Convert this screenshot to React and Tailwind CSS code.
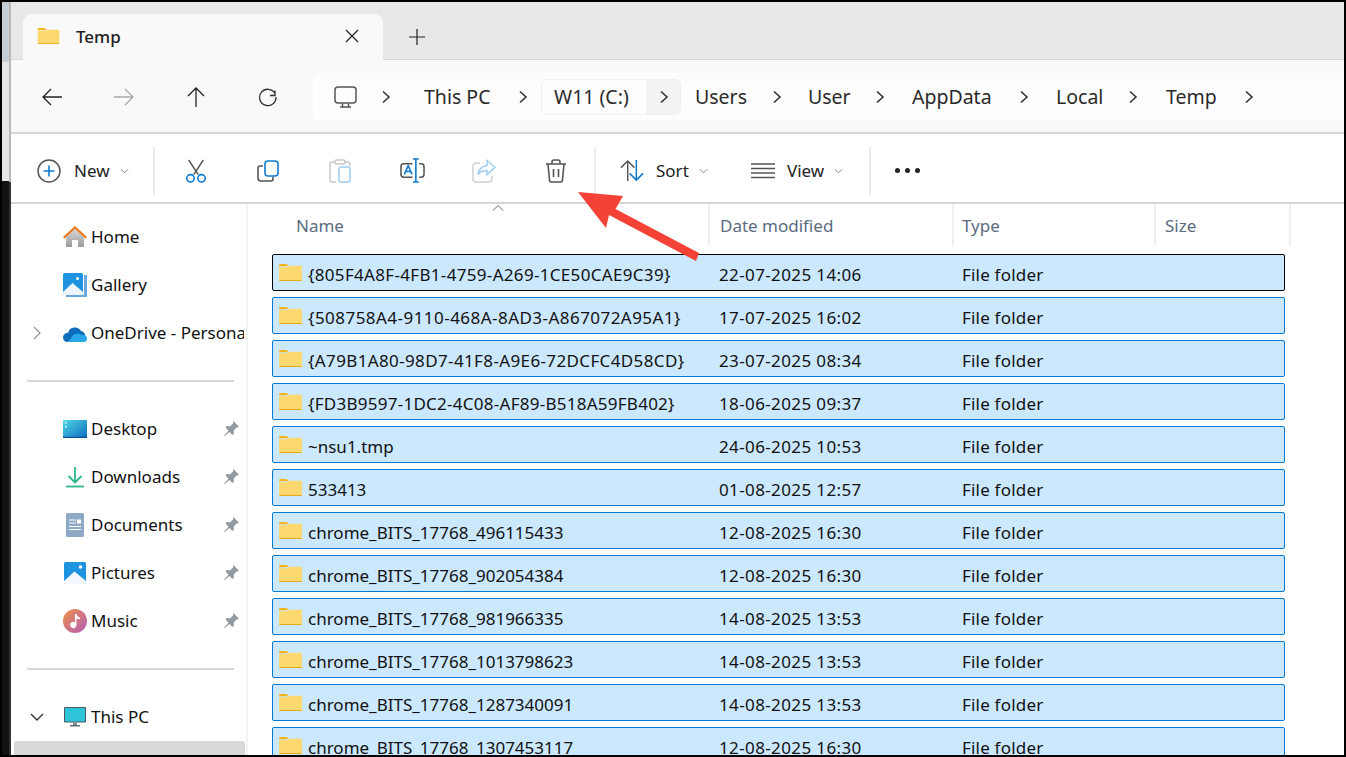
import React from "react";

const FONT = "font-['Noto_Sans',sans-serif]";

function Folder({ className = "" }) {
  return (
    <svg viewBox="0 0 24 20" className={className}>
      <path d="M0 2a1 1 0 0 1 1-1h7l2 2.500H0z" fill="#f5b31c" />
      <path d="M0 4.500h8.500L10.500 3H23a1 1 0 0 1 1 1v14a1 1 0 0 1-1 1H1a1 1 0 0 1-1-1z" fill="#fbd96f" />
      <path d="M0 18h24v.2a.8.8 0 0 1-.8.8H.8a.8.8 0 0 1-.8-.8z" fill="#eaa71e" />
    </svg>
  );
}

function Chevron({ className = "" }) {
  return (
    <svg viewBox="0 0 10 14" className={`w-[10px] h-[14px] ${className}`} fill="none" stroke="#333" strokeWidth="1.600">
      <path d="M2 1.500 8 7l-6 5.500" />
    </svg>
  );
}

function Small({ className = "" }) {
  return (
    <svg viewBox="0 0 10 6" className={`w-[9px] h-[6px] ${className}`} fill="none" stroke="#777" strokeWidth="1">
      <path d="M1 1l4 4 4-4" />
    </svg>
  );
}

function Pin() {
  return (
    <svg viewBox="0 0 16 16" className="w-[17px] h-[17px]">
      <path d="M9.600.8l5.600 5.600-1.500.6-.7-.2-2.900 3 .2 3-1.400 1.400-3-3L1.600 15 1 14.400l4.300-4.300-3-3 1.400-1.400 3 .2 3-2.900-.2-.7z" fill="#939ba1" />
    </svg>
  );
}

function Tool({ children }) {
  return <div className="w-[72px] h-[48px] flex items-center justify-center shrink-0">{children}</div>;
}

const rows = [
  ["{805F4A8F-4FB1-4759-A269-1CE50CAE9C39}", "22-07-2025 14:06", "tracking-[0.32px]"],
  ["{508758A4-9110-468A-8AD3-A867072A95A1}", "17-07-2025 16:02", "tracking-[0.46px]"],
  ["{A79B1A80-98D7-41F8-A9E6-72DCFC4D58CD}", "23-07-2025 08:34", "tracking-[0.37px]"],
  ["{FD3B9597-1DC2-4C08-AF89-B518A59FB402}", "18-06-2025 09:37", "tracking-[0.26px]"],
  ["~nsu1.tmp", "24-06-2025 10:53", ""],
  ["533413", "01-08-2025 12:57", ""],
  ["chrome_BITS_17768_496115433", "12-08-2025 16:30", ""],
  ["chrome_BITS_17768_902054384", "12-08-2025 16:30", ""],
  ["chrome_BITS_17768_981966335", "14-08-2025 13:53", ""],
  ["chrome_BITS_17768_1013798623", "14-08-2025 13:53", ""],
  ["chrome_BITS_17768_1287340091", "14-08-2025 13:53", ""],
  ["chrome_BITS_17768_1307453117", "12-08-2025 16:30", ""],
];

function NavItem({ icon, label, pin, chevron }) {
  return (
    <div className="h-[48px] flex items-center relative shrink-0">
      <div className="w-[16px] flex justify-center ml-[18px] shrink-0">{chevron}</div>
      <div className="w-[26px] h-[26px] ml-[17px] flex items-center justify-center shrink-0">{icon}</div>
      <span className="ml-[3px] whitespace-nowrap overflow-hidden w-[153px] text-[17px] text-[#111]">{label}</span>
      {pin && <div className="absolute left-[212px] top-[15px]"><Pin /></div>}
    </div>
  );
}

const HomeIcon = (
  <svg viewBox="0 0 24 24" className="w-[24px] h-[24px]">
    <defs>
      <linearGradient id="hm" x1="0" y1="0" x2="0" y2="1">
        <stop offset="0" stopColor="#d8d8d8" />
        <stop offset="1" stopColor="#9c9c9c" />
      </linearGradient>
    </defs>
    <path d="M3 12 12 4l9 8v10h-6v-7H9v7H3z" fill="url(#hm)" />
    <path d="M0 12 12 1l12 11-1.500 1.500L12 4 1.500 13.500z" fill="#e8791e" />
  </svg>
);
const GalleryIcon = (
  <svg viewBox="0 0 24 24" className="w-[24px] h-[24px]">
    <path d="M21 2h3v21a1 1 0 0 1-1 1H3v-2h18z" fill="#6aa7dc" />
    <rect x="0" y="0" width="20" height="22" rx="1.500" fill="#1e93e0" />
    <path d="M0 19 9.500 10 20 19v1.500a1.500 1.500 0 0 1-1.500 1.500h-17A1.500 1.500 0 0 1 0 20.500z" fill="#eef6fd" />
    <circle cx="14.500" cy="5.500" r="1.500" fill="#fff" />
  </svg>
);
const CloudIcon = (
  <svg viewBox="0 0 24 16" className="w-[24px] h-[16px] mt-[1px]">
    <path d="M5 7.500A7 7 0 0 1 18 5a5 5 0 0 1 2 9H5a4.500 4.500 0 0 1 0-6.500z" fill="#0f6cbd" />
    <path d="M4.500 16A4.500 4.500 0 0 1 0 11.500 4.500 4.500 0 0 1 5.500 7L12 11z" fill="#0f6cbd" />
    <path d="M5 16h15.500a3.500 3.500 0 0 0 3.500-3.500 3.500 3.500 0 0 0-5-3.200 6.500 6.500 0 0 0-9 0z" fill="#28a8ea" />
  </svg>
);
const DesktopIcon = (
  <svg viewBox="0 0 24 18" className="w-[24px] h-[18px]">
    <defs>
      <linearGradient id="dk" x1="0" y1="0" x2="1" y2="1">
        <stop offset="0" stopColor="#4fd8e8" />
        <stop offset="1" stopColor="#0f6cbd" />
      </linearGradient>
    </defs>
    <rect width="24" height="18" rx="1" fill="url(#dk)" />
    <rect y="16.800" width="24" height="1.200" fill="#0a4f8f" />
    <rect x="2" y="2" width="1.500" height="1.500" fill="#fff" />
    <rect x="2" y="6" width="1.500" height="1.500" fill="#fff" />
  </svg>
);
const DownloadIcon = (
  <svg viewBox="0 0 20 22" className="w-[20px] h-[22px]" fill="none" stroke="#2bb78c" strokeWidth="1.800">
    <path d="M10 1v15M3.500 10 10 16.500 16.500 10" />
    <path d="M1 20.500h18" stroke="#2bb78c" />
  </svg>
);
const DocIcon = (
  <svg viewBox="0 0 18 24" className="w-[18px] h-[24px]">
    <rect width="18" height="24" rx="1.500" fill="#8ea9c6" />
    <path d="M3 7h7M3 10h7M3 13.500h12M3 16.500h12" stroke="#fff" strokeWidth="1" />
    <rect x="11" y="6.500" width="4" height="4" fill="#fff" />
  </svg>
);
const PicIcon = (
  <svg viewBox="0 0 22 22" className="w-[22px] h-[22px]">
    <rect width="22" height="22" rx="1.500" fill="#1e93e0" />
    <path d="M0 19 10.500 9.500 22 19v1.500a1.500 1.500 0 0 1-1.500 1.500h-19A1.500 1.500 0 0 1 0 20.500z" fill="#f2f8fd" />
    <circle cx="16.500" cy="5" r="1.800" fill="#fff" />
  </svg>
);
const MusicIcon = (
  <svg viewBox="0 0 24 24" className="w-[24px] h-[24px]">
    <defs>
      <linearGradient id="mu" x1="0" y1="0" x2="1" y2="1">
        <stop offset="0" stopColor="#f0914a" />
        <stop offset="1" stopColor="#b25cb8" />
      </linearGradient>
    </defs>
    <circle cx="12" cy="12" r="12" fill="url(#mu)" />
    <path d="M12 5h1.500c.3 2 1.500 3 3.500 3.500v2c-1.500 0-2.500-.5-3.500-1.200V16a3.200 3.200 0 1 1-1.500-2.700z" fill="#fff" />
  </svg>
);
const PcIcon = (
  <svg viewBox="0 0 22 20" className="w-[22px] h-[20px]">
    <rect width="22" height="15.500" rx="1" fill="#4a5a66" />
    <rect x="1" y="1" width="20" height="13.500" fill="#2ec4d8" />
    <rect x="9" y="15.500" width="4" height="2.500" fill="#7b8a94" />
    <rect x="6" y="18" width="10" height="1.500" fill="#5f6c75" />
  </svg>
);

export default function App() {
  return (
    <div className={`relative w-[1346px] h-[757px] bg-black overflow-hidden pt-[2px] pr-[2px] pb-[2px] pl-[2px] ${FONT}`}>
      <div className="w-full h-full flex">
        <div className="w-[7px] shrink-0 flex flex-col">
          <div className="h-[60px] bg-[#c4ccd4]" />
          <div className="h-[119px] bg-[#e6e6e6]" />
          <div className="flex-1 bg-[#101113]" />
        </div>
        <div className="flex-1 min-w-0 flex flex-col border-l-2 border-[#2f3133] [border-image:linear-gradient(#b8b8b8_0,#b8b8b8_24%,#303234_24%)_1]">
          {/* tab strip */}
          <div className="h-[58px] bg-[#e8e8e8] flex items-end pl-[12px] shrink-0 border-b border-[#d6d6d6]">
            <div className="w-[360px] h-[46px] bg-[#f9f9f9] rounded-t-[9px] flex items-center pl-[14px] pb-[1px] relative -mb-px">
              <Folder className="w-[23px] h-[18px] -mt-[2px]" />
              <span className="ml-[16px] text-[17px] font-medium text-[#222]">Temp</span>
              <svg viewBox="0 0 14 14" className="w-[14px] h-[14px] ml-[224px] -mt-[2px]" fill="none" stroke="#222" strokeWidth="1.200">
                <path d="M1 1l12 12M13 1 1 13" />
              </svg>
            </div>
            <svg viewBox="0 0 16 16" className="w-[16px] h-[16px] ml-[26px] mb-[14px]" fill="none" stroke="#222" strokeWidth="1.200">
              <path d="M8 0v16M0 8h16" />
            </svg>
          </div>
          {/* nav row */}
          <div className="h-[72px] pt-[2px] bg-[#f9f9f9] flex items-center shrink-0">
            <div className="flex pl-[5px] items-center">
              <Tool>
                <svg viewBox="0 0 20 18" className="w-[20px] h-[18px]" fill="none" stroke="#222" strokeWidth="1.300"><path d="M20 9H1M9 1 1 9l8 8" /></svg>
              </Tool>
              <Tool>
                <svg viewBox="0 0 20 18" className="w-[20px] h-[18px]" fill="none" stroke="#a8a8a8" strokeWidth="1.300"><path d="M0 9h19M11 1l8 8-8 8" /></svg>
              </Tool>
              <Tool>
                <svg viewBox="0 0 18 20" className="w-[18px] h-[20px]" fill="none" stroke="#222" strokeWidth="1.300"><path d="M9 20V1M1 9l8-8 8 8" /></svg>
              </Tool>
              <Tool>
                <svg viewBox="0 0 20 20" className="w-[20px] h-[20px]" fill="none" stroke="#333" strokeWidth="1.300"><path d="M17 3.500v5h-5M17 6.500A8.200 8.200 0 1 0 18 10" /></svg>
              </Tool>
            </div>
            <div className="ml-[9px] flex-1 h-[48px] bg-[#fdfdfd] rounded-l-[7px] flex items-center text-[19.5px] text-[#2a2a2a] whitespace-nowrap">
              <div className="w-[68px] pl-[21px] shrink-0">
                <svg viewBox="0 0 23 23" className="w-[23px] h-[23px]" fill="none" stroke="#555" strokeWidth="1.500">
                  <rect x="1" y="1" width="21" height="16" rx="3" />
                  <path d="M8.500 17.500v3M14.500 17.500v3M6 21h11" />
                </svg>
              </div>
              <div className="w-[43px] shrink-0"><Chevron /></div>
              <div className="w-[94px] shrink-0">This PC</div>
              <div className="w-[23px] shrink-0"><Chevron /></div>
              <div className="w-[140px] h-[36px] shrink-0 rounded-[6px] border border-[#f0f0f0] bg-[#f3f3f3] flex mr-[14px] overflow-hidden">
                <div className="w-[104px] bg-[#fdfdfd] pl-[12px] flex items-center">W11 (C:)</div>
                <div className="flex-1 flex items-center pl-[13px]"><Chevron /></div>
              </div>
              <div className="w-[77px] shrink-0">Users</div>
              <div className="w-[36px] shrink-0"><Chevron /></div>
              <div className="w-[67px] shrink-0">User</div>
              <div className="w-[37px] shrink-0"><Chevron /></div>
              <div className="w-[107px] shrink-0">AppData</div>
              <div className="w-[37px] shrink-0"><Chevron /></div>
              <div className="w-[72px] shrink-0">Local</div>
              <div className="w-[38px] shrink-0"><Chevron /></div>
              <div className="w-[78px] shrink-0">Temp</div>
              <Chevron />
            </div>
          </div>
          {/* toolbar */}
          <div className="h-[72px] pt-[5px] bg-white border-y-2 border-[#d6d6d6] flex items-center shrink-0 text-[17px] text-[#222]">
            <div className="w-[144px] h-[48px] flex items-center pl-[26px] shrink-0 border-r-2 border-[#ececec]">
              <svg viewBox="0 0 24 24" className="w-[24px] h-[24px]" fill="none">
                <circle cx="12" cy="12" r="11" stroke="#555" strokeWidth="1.500" />
                <path d="M12 6.500v11M6.500 12h11" stroke="#0f7bd0" strokeWidth="1.600" />
              </svg>
              <span className="ml-[13px]">New</span>
              <Small className="ml-[10px]" />
            </div>
            <div className="flex items-center pl-[5px]">
              <Tool>
                <svg viewBox="0 0 24 26" className="w-[22px] h-[24px]" fill="none">
                  <path d="M4 1 14.500 17M20 1 9.500 17" stroke="#555" strokeWidth="1.600" />
                  <circle cx="6" cy="21" r="4" stroke="#0f7bd0" strokeWidth="1.800" />
                  <circle cx="18" cy="21" r="4" stroke="#0f7bd0" strokeWidth="1.800" />
                </svg>
              </Tool>
              <Tool>
                <svg viewBox="0 0 22 22" className="w-[22px] h-[22px]" fill="none">
                  <path d="M6 6H3a2 2 0 0 0-2 2v10a3 3 0 0 0 3 3h10a2 2 0 0 0 2-2v-2" stroke="#555" strokeWidth="1.600" />
                  <rect x="8" y="1" width="13" height="15" rx="3" stroke="#0f7bd0" strokeWidth="1.600" />
                </svg>
              </Tool>
              <Tool>
                <svg viewBox="0 0 22 24" className="w-[22px] h-[24px]" fill="none">
                  <path d="M6 3H3a2 2 0 0 0-2 2v16a2 2 0 0 0 2 2h4M16 3h3a2 2 0 0 1 2 2v2" stroke="#c8c8c8" strokeWidth="1.500" />
                  <rect x="6" y="1" width="10" height="4" rx="1.500" stroke="#c8c8c8" strokeWidth="1.500" />
                  <rect x="10" y="8" width="11" height="15" rx="2" stroke="#9fcdf0" strokeWidth="1.500" />
                </svg>
              </Tool>
              <Tool>
                <svg viewBox="0 0 26 26" className="w-[25px] h-[25px]" fill="none">
                  <path d="M13 6H4a3 3 0 0 0-3 3v8a3 3 0 0 0 3 3h9M20 6h2a3 3 0 0 1 3 3v8a3 3 0 0 1-3 3h-2" stroke="#555" strokeWidth="1.600" />
                  <path d="M13.500 1h6M16.500 1v24M13.500 25h6" stroke="#0f7bd0" strokeWidth="1.700" />
                  <path d="M4.500 17 8.500 8l4 9M6 14h5" stroke="#0f7bd0" strokeWidth="1.700" />
                </svg>
              </Tool>
              <Tool>
                <svg viewBox="0 0 24 24" className="w-[24px] h-[24px]" fill="none">
                  <path d="M8 4H4a3 3 0 0 0-3 3v13a3 3 0 0 0 3 3h13a3 3 0 0 0 3-3v-3" stroke="#d0d0d0" strokeWidth="1.500" />
                  <path d="M15 1.500 23 8.500l-8 7v-4c-4 0-7 1-9 4 .5-5 3.500-8 9-9z" stroke="#9fcdf0" strokeWidth="1.500" />
                </svg>
              </Tool>
              <Tool>
                <svg viewBox="0 0 22 24" className="w-[22px] h-[24px]" fill="none" stroke="#555" strokeWidth="1.600">
                  <path d="M1 5h20M7 5V3a2 2 0 0 1 2-2h4a2 2 0 0 1 2 2v2M3 5l1.500 16a2 2 0 0 0 2 2h9a2 2 0 0 0 2-2L19 5M8.500 10v8M13.500 10v8" />
                </svg>
              </Tool>
            </div>
            <div className="w-[2px] h-[48px] bg-[#ececec] ml-[2px] shrink-0" />
            <div className="flex items-center pl-[24px] w-[132px] shrink-0">
              <svg viewBox="0 0 26 24" className="w-[25px] h-[23px]" fill="none">
                <path d="M8 23V2M1 9l7-7 7 7" stroke="#555" strokeWidth="1.500" />
                <path d="M17 1v21M10 15l7 7 7-7" stroke="#0f7bd0" strokeWidth="1.600" />
              </svg>
              <span className="ml-[11px]">Sort</span>
              <Small className="ml-[10px]" />
            </div>
            <div className="flex items-center pl-[23px] w-[141px] shrink-0">
              <svg viewBox="0 0 24 16" className="w-[24px] h-[16px]" fill="none" stroke="#555" strokeWidth="1.300">
                <path d="M0 1h24M0 5.500h24M0 10h24M0 14.500h24" />
              </svg>
              <span className="ml-[12px]">View</span>
              <Small className="ml-[10px]" />
            </div>
            <div className="w-[2px] h-[48px] bg-[#ececec] shrink-0" />
            <div className="flex gap-[5px] ml-[24px]">
              <div className="w-[5px] h-[5px] rounded-full bg-[#222]" />
              <div className="w-[5px] h-[5px] rounded-full bg-[#222]" />
              <div className="w-[5px] h-[5px] rounded-full bg-[#222]" />
            </div>
          </div>
          {/* body */}
          <div className="flex-1 min-h-0 flex bg-white">
            <div className="w-[237px] shrink-0 border-r-2 border-[#f3f3f3] flex flex-col overflow-hidden pt-[9px]">
              <NavItem icon={HomeIcon} label="Home" />
              <NavItem icon={GalleryIcon} label="Gallery" />
              <NavItem
                icon={CloudIcon}
                label="OneDrive - Personal"
                chevron={<svg viewBox="0 0 8 14" className="w-[8px] h-[14px]" fill="none" stroke="#999" strokeWidth="1.300"><path d="M1 1l6 6-6 6" /></svg>}
              />
              <div className="h-[48px] flex items-center shrink-0"><div className="ml-[16px] w-[207px] h-[2px] bg-[#d8d8d8]" /></div>
              <NavItem icon={DesktopIcon} label="Desktop" pin />
              <NavItem icon={DownloadIcon} label="Downloads" pin />
              <NavItem icon={DocIcon} label="Documents" pin />
              <NavItem icon={PicIcon} label="Pictures" pin />
              <NavItem icon={MusicIcon} label="Music" pin />
              <div className="h-[48px] flex items-center shrink-0"><div className="ml-[16px] w-[207px] h-[2px] bg-[#d8d8d8]" /></div>
              <NavItem
                icon={PcIcon}
                label="This PC"
                chevron={<svg viewBox="0 0 14 8" className="w-[14px] h-[8px]" fill="none" stroke="#333" strokeWidth="1.400"><path d="M1 1l6 6 6-6" /></svg>}
              />
              <div className="h-[20px] ml-[3px] w-[231px] bg-[#d9d9d9] rounded-[3px] shrink-0" />
            </div>
            <div className="flex-1 min-w-0 overflow-hidden relative">
              <div className="h-[42px] flex text-[17px] text-[#5b6b80] relative">
                <svg viewBox="0 0 12 6" className="absolute left-[244px] top-[1px] w-[12px] h-[6px]" fill="none" stroke="#666" strokeWidth="1"><path d="M1 5.500l5-5 5 5" /></svg>
                <div className="w-[462px] pl-[48px] pt-[9px] border-r-2 border-[#efefef] shrink-0">Name</div>
                <div className="w-[244px] pl-[10px] pt-[9px] border-r-2 border-[#efefef] shrink-0">Date modified</div>
                <div className="w-[202px] pl-[8px] pt-[9px] border-r-2 border-[#efefef] shrink-0">Type</div>
                <div className="w-[135px] pl-[9px] pt-[9px] border-r-2 border-[#efefef] shrink-0">Size</div>
              </div>
              <div className="mt-[8px] ml-[24px] w-[1013px] flex flex-col gap-[6px] text-[17px] text-[#111]">
                {rows.map((r, i) => (
                  <div key={r[0]} className={`h-[37px] shrink-0 flex items-center bg-[#cce8ff] border rounded-[2px] whitespace-nowrap ${i === 0 ? "border-black" : "border-[#0078d7]"}`}>
                    <Folder className="w-[23px] h-[19px] ml-[6px] shrink-0 -mt-[1px]" />
                    <span className={`w-[411px] ml-[6px] pt-[4px] shrink-0 ${r[2]}`}>{r[0]}</span>
                    <span className="w-[243px] pt-[4px] shrink-0 tracking-[0.38px]">{r[1]}</span>
                    <span className="pt-[4px] tracking-[0.2px]">File folder</span>
                  </div>
                ))}
              </div>
            </div>
          </div>
        </div>
      </div>
      <svg viewBox="0 0 1346 757" className="absolute left-0 top-0 w-[1346px] h-[757px] pointer-events-none">
        <path d="M578 192 623 196 615.500 209 699 253 696 261 609 215 606 228z" fill="#f44336" />
      </svg>
    </div>
  );
}
